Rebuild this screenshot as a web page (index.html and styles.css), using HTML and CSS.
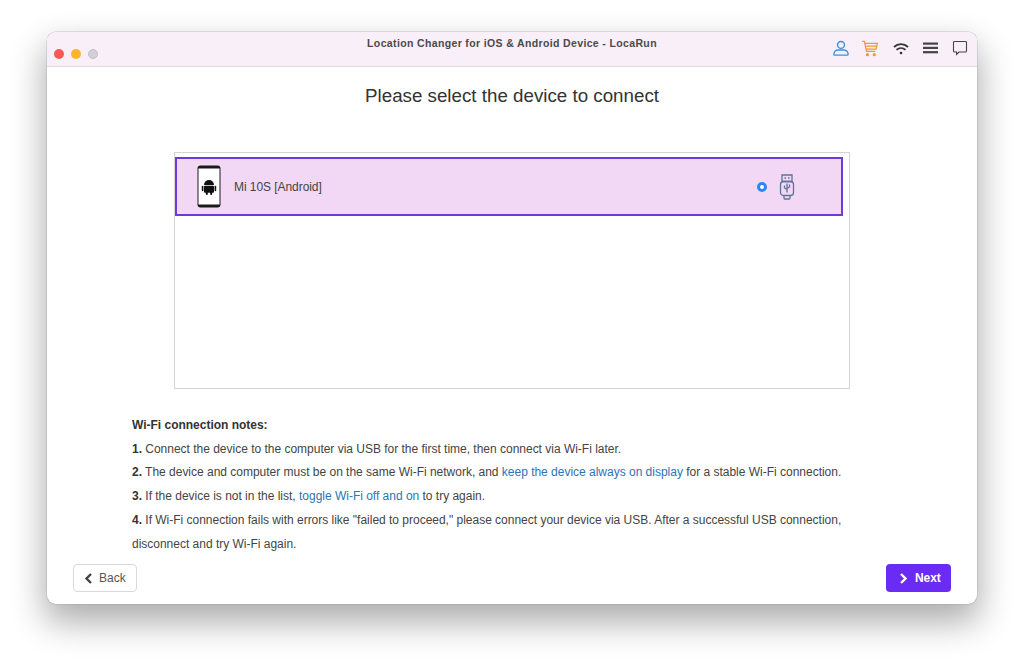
FILE: index.html
```html
<!DOCTYPE html>
<html lang="en">
<head>
<meta charset="utf-8">
<title>LocaRun</title>
<link rel="stylesheet" href="styles.css">
</head>
<body>
<div class="window">
  <header class="titlebar">
    <div class="lights"><span class="light red"></span><span class="light yellow"></span><span class="light grey"></span></div>
    <div class="title">Location Changer for iOS &amp; Android Device - LocaRun</div>
    <div class="tools">
      <svg class="tool user" width="16" height="16" viewBox="0 0 18 18" fill="none" stroke="#3f8fd8" stroke-width="1.600"><circle cx="9" cy="5.500" r="3.900"/><path d="M1 16c0-3.200 2.600-4.800 4.800-4.800h6.400c2.200 0 4.800 1.600 4.800 4.800 0 .6-.3 1-.9 1H1.900c-.6 0-.9-.4-.9-1z"/></svg>
      <svg class="tool cart" width="18" height="17" viewBox="0 0 18 18" fill="none" stroke="#f0963c" stroke-width="1.300"><path d="M.5 1.500h2.600l2.200 10.500h9.400"/><path d="M3.400 3.500h13.400l-1.400 6.200H4.800"/><path d="M5 6.500h11"/><circle cx="6.300" cy="15.500" r="1" fill="#f0963c"/><circle cx="13.500" cy="15.500" r="1" fill="#f0963c"/></svg>
      <svg class="tool wifi" width="16" height="14" viewBox="0 0 16 14" fill="none" stroke="#333" stroke-width="1.800"><path d="M1 5c4-3.800 10-3.800 14 0"/><path d="M3.500 7.800c2.600-2.300 6.400-2.300 9 0"/><circle cx="8" cy="11" r="1.300" fill="#333" stroke="none"/></svg>
      <svg class="tool menu" width="15" height="12" viewBox="0 0 15 12" fill="#444"><rect y="0.500" width="15" height="2.200"/><rect y="4.800" width="15" height="2.200"/><rect y="9.100" width="15" height="2.200"/></svg>
      <svg class="tool" width="16" height="16" viewBox="0 0 16 16" fill="none" stroke="#444" stroke-width="1.100"><path d="M2.500 1.500h11c.6 0 1 .4 1 1v8.500c0 .6-.4 1-1 1H7l-2.400 2.500v-2.500H2.500c-.6 0-1-.4-1-1V2.500c0-.6.4-1 1-1z"/></svg>
    </div>
  </header>
  <main class="content">
    <h1 class="heading">Please select the device to connect</h1>
    <section class="device-list">
      <div class="device selected">
        <svg class="phone" width="24" height="43" viewBox="0 0 24 43">
          <rect x="0.500" y="0.500" width="23" height="42" rx="3" fill="#1a1a1a"/>
          <rect x="1.500" y="3.500" width="21" height="36" fill="#fff"/>
          <g fill="#111">
            <path d="M7 20a5 5 0 0 1 10 0z"/>
            <rect x="7" y="20.800" width="10" height="7" rx="1"/>
            <rect x="4.800" y="20.800" width="1.600" height="5.500" rx=".8"/>
            <rect x="17.600" y="20.800" width="1.600" height="5.500" rx=".8"/>
            <rect x="8.800" y="26.500" width="2" height="3.500" rx="1"/>
            <rect x="13.200" y="26.500" width="2" height="3.500" rx="1"/>
          </g>
        </svg>
        <span class="device-name">Mi 10S [Android]</span>
        <span class="radio"></span>
        <svg class="usb" width="16" height="26" viewBox="0 0 16 26" fill="none" stroke="#5f7299" stroke-width="1.300">
          <path d="M3 1h10v6.500H3z"/>
          <rect x="1.500" y="7.500" width="13" height="14" rx="3"/>
          <path d="M5 21.500v2.500c0 .6.400 1 1 1h4c.6 0 1-.4 1-1v-2.500"/>
          <path d="M8 9.500v9M5.500 11.500v2.500l2.500 1.500M10.500 10.500v2.500l-2.500 1.500"/>
          <path d="M5.500 4h1.500M9 4h1.500"/>
        </svg>
      </div>
    </section>
    <section class="notes">
      <p class="note-title">Wi-Fi connection notes:</p>
      <p><b>1.</b> Connect the device to the computer via USB for the first time, then connect via Wi-Fi later.</p>
      <p><b>2.</b> The device and computer must be on the same Wi-Fi network, and <a href="#">keep the device always on display</a> for a stable Wi-Fi connection.</p>
      <p><b>3.</b> If the device is not in the list, <a href="#">toggle Wi-Fi off and on</a> to try again.</p>
      <p><b>4.</b> If Wi-Fi connection fails with errors like "failed to proceed," please connect your device via USB. After a successful USB connection, disconnect and try Wi-Fi again.</p>
    </section>
    <footer class="actions">
      <button class="btn back"><svg width="9" height="11" viewBox="0 0 9 11" fill="none" stroke="#444" stroke-width="2.400"><path d="M7 1L2.500 5.500 7 10"/></svg>Back</button>
      <button class="btn next"><svg width="9" height="11" viewBox="0 0 9 11" fill="none" stroke="#fff" stroke-width="2.400"><path d="M2 1l4.500 4.500L2 10"/></svg>Next</button>
    </footer>
  </main>
</div>
</body>
</html>
```
FILE: styles.css
```css
* { box-sizing: border-box; }
html, body { margin: 0; height: 667px; overflow: hidden; }
body {
  background: #fff;
  padding: 32px 47px 63px;
  font-family: "Liberation Sans", Arial, sans-serif;
}
.window {
  height: 572px;
  border-radius: 9px;
  background: #fff;
  box-shadow: 0 0 0 .5px rgba(150,150,150,.5), 0 16px 34px 2px rgba(0,0,0,.33);
  overflow: hidden;
  display: flex;
  flex-direction: column;
}
.titlebar {
  height: 35px;
  flex: none;
  background: #f8eff8;
  border-bottom: 1px solid #dedbde;
  display: grid;
  grid-template-columns: 1fr auto 1fr;
}
.lights { display: flex; gap: 7px; padding: 17px 0 0 7px; }
.light { width: 10px; height: 10px; border-radius: 50%; }
.red { background: #fc5753; }
.yellow { background: #fdb42a; }
.grey { background: #d5d0d8; border: 1px solid #c4bfc7; }
.title {
  font-size: 10.500px;
  font-weight: 700;
  color: #4a4a4a;
  padding-top: 5px;
  letter-spacing: .36px;
}
.tools {
  display: flex;
  justify-content: flex-end;
  align-items: center;
  gap: 13px;
  padding: 0 9px 2px 0;
}
.cart { margin-left: -1px; margin-right: 1px; }
.wifi { margin-right: 1px; margin-top: 1px; }
.menu { margin-right: 1px; }
.content {
  flex: 1;
  display: flex;
  flex-direction: column;
  padding: 0 26px 12px;
  min-height: 0;
}
.heading {
  margin: 18px 0 0;
  font-size: 18.750px;
  font-weight: 400;
  line-height: 22px;
  color: #333;
  text-align: center;
}
.device-list {
  width: 676px;
  height: 237px;
  margin: 45px 0 0 101px;
  border: 1px solid #d4d4d4;
  padding: 4px 6px 0 0;
  flex: none;
}
.device {
  height: 59px;
  display: flex;
  align-items: center;
  padding-left: 20px;
}
.selected { background: #f3d8f6; border: 2px solid #6d3bdc; }
.phone { flex: none; }
.device-name { margin-left: 13px; font-size: 12px; letter-spacing: -.06px; color: #444; flex: 1; }
.radio {
  width: 10px;
  height: 10px;
  border-radius: 50%;
  background: #fff;
  border: 3px solid #2d86f5;
  flex: none;
}
.usb { margin: 0 46px 0 12px; flex: none; }
.notes {
  margin: 25px 0 0 59px;
  width: 716px;
  font-size: 12px;
  line-height: 23.700px;
  letter-spacing: -.012px;
  color: #444;
  flex: none;
}
.notes p { margin: 0; }
.notes b, .note-title { font-weight: 700; color: #333; }
.notes a { color: #2b74b8; text-decoration: none; }
.actions {
  margin-top: auto;
  display: flex;
  justify-content: space-between;
}
.btn {
  height: 28px;
  display: flex;
  align-items: center;
  border-radius: 4px;
  font: 12px "Liberation Sans", Arial, sans-serif;
}
.back {
  width: 64px;
  padding: 0 0 0 10px;
  gap: 6px;
  background: #fff;
  border: 1px solid #d9d9d9;
  color: #555;
}
.next {
  width: 65px;
  padding: 0 0 0 13px;
  gap: 7px;
  background: #6a2cf5;
  border: 0;
  color: #fff;
  font-weight: 700;
  letter-spacing: -.1px;
}
```
